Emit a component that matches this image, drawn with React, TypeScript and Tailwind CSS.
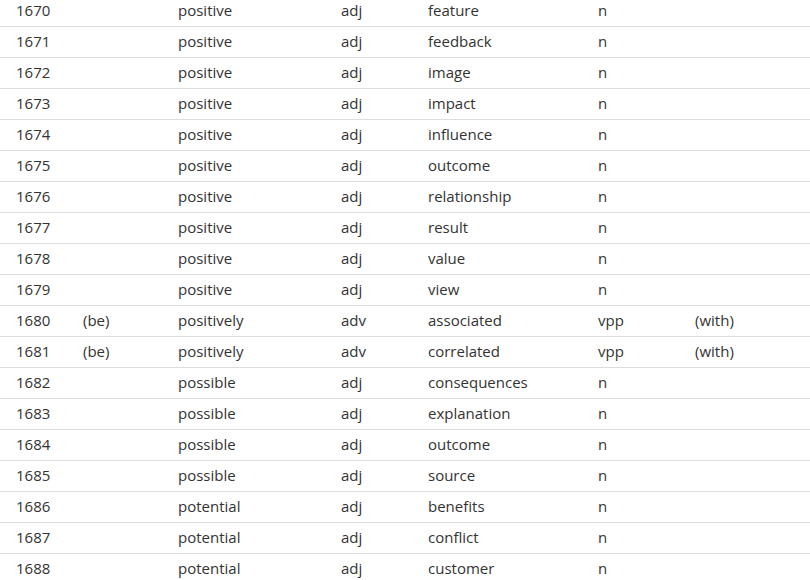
const rows: [string, string, string, string, string, string, string][] = [
  ["1670", "", "positive", "adj", "feature", "n", ""],
  ["1671", "", "positive", "adj", "feedback", "n", ""],
  ["1672", "", "positive", "adj", "image", "n", ""],
  ["1673", "", "positive", "adj", "impact", "n", ""],
  ["1674", "", "positive", "adj", "influence", "n", ""],
  ["1675", "", "positive", "adj", "outcome", "n", ""],
  ["1676", "", "positive", "adj", "relationship", "n", ""],
  ["1677", "", "positive", "adj", "result", "n", ""],
  ["1678", "", "positive", "adj", "value", "n", ""],
  ["1679", "", "positive", "adj", "view", "n", ""],
  ["1680", "(be)", "positively", "adv", "associated", "vpp", "(with)"],
  ["1681", "(be)", "positively", "adv", "correlated", "vpp", "(with)"],
  ["1682", "", "possible", "adj", "consequences", "n", ""],
  ["1683", "", "possible", "adj", "explanation", "n", ""],
  ["1684", "", "possible", "adj", "outcome", "n", ""],
  ["1685", "", "possible", "adj", "source", "n", ""],
  ["1686", "", "potential", "adj", "benefits", "n", ""],
  ["1687", "", "potential", "adj", "conflict", "n", ""],
  ["1688", "", "potential", "adj", "customer", "n", ""],
]

// column widths, every cell has 16px left padding
const widths = ["w-[67px]", "w-[95px]", "w-[163px]", "w-[87px]", "w-[170px]", "w-[97px]", "flex-1"]

export default function App() {
  return (
    <div className="w-[810px] h-[580px] overflow-hidden bg-white">
      <div className="-mt-[4px] text-[15px] text-[#333] font-['Open_Sans',sans-serif]">
        {rows.map((row, i) => (
          <div key={i} className="flex h-[31px] items-center pb-[2px] border-b border-[#dddddd]">
            {row.map((cell, j) => (
              <div key={j} className={`${widths[j]} pl-4 whitespace-nowrap`}>
                {cell}
              </div>
            ))}
          </div>
        ))}
      </div>
    </div>
  )
}
